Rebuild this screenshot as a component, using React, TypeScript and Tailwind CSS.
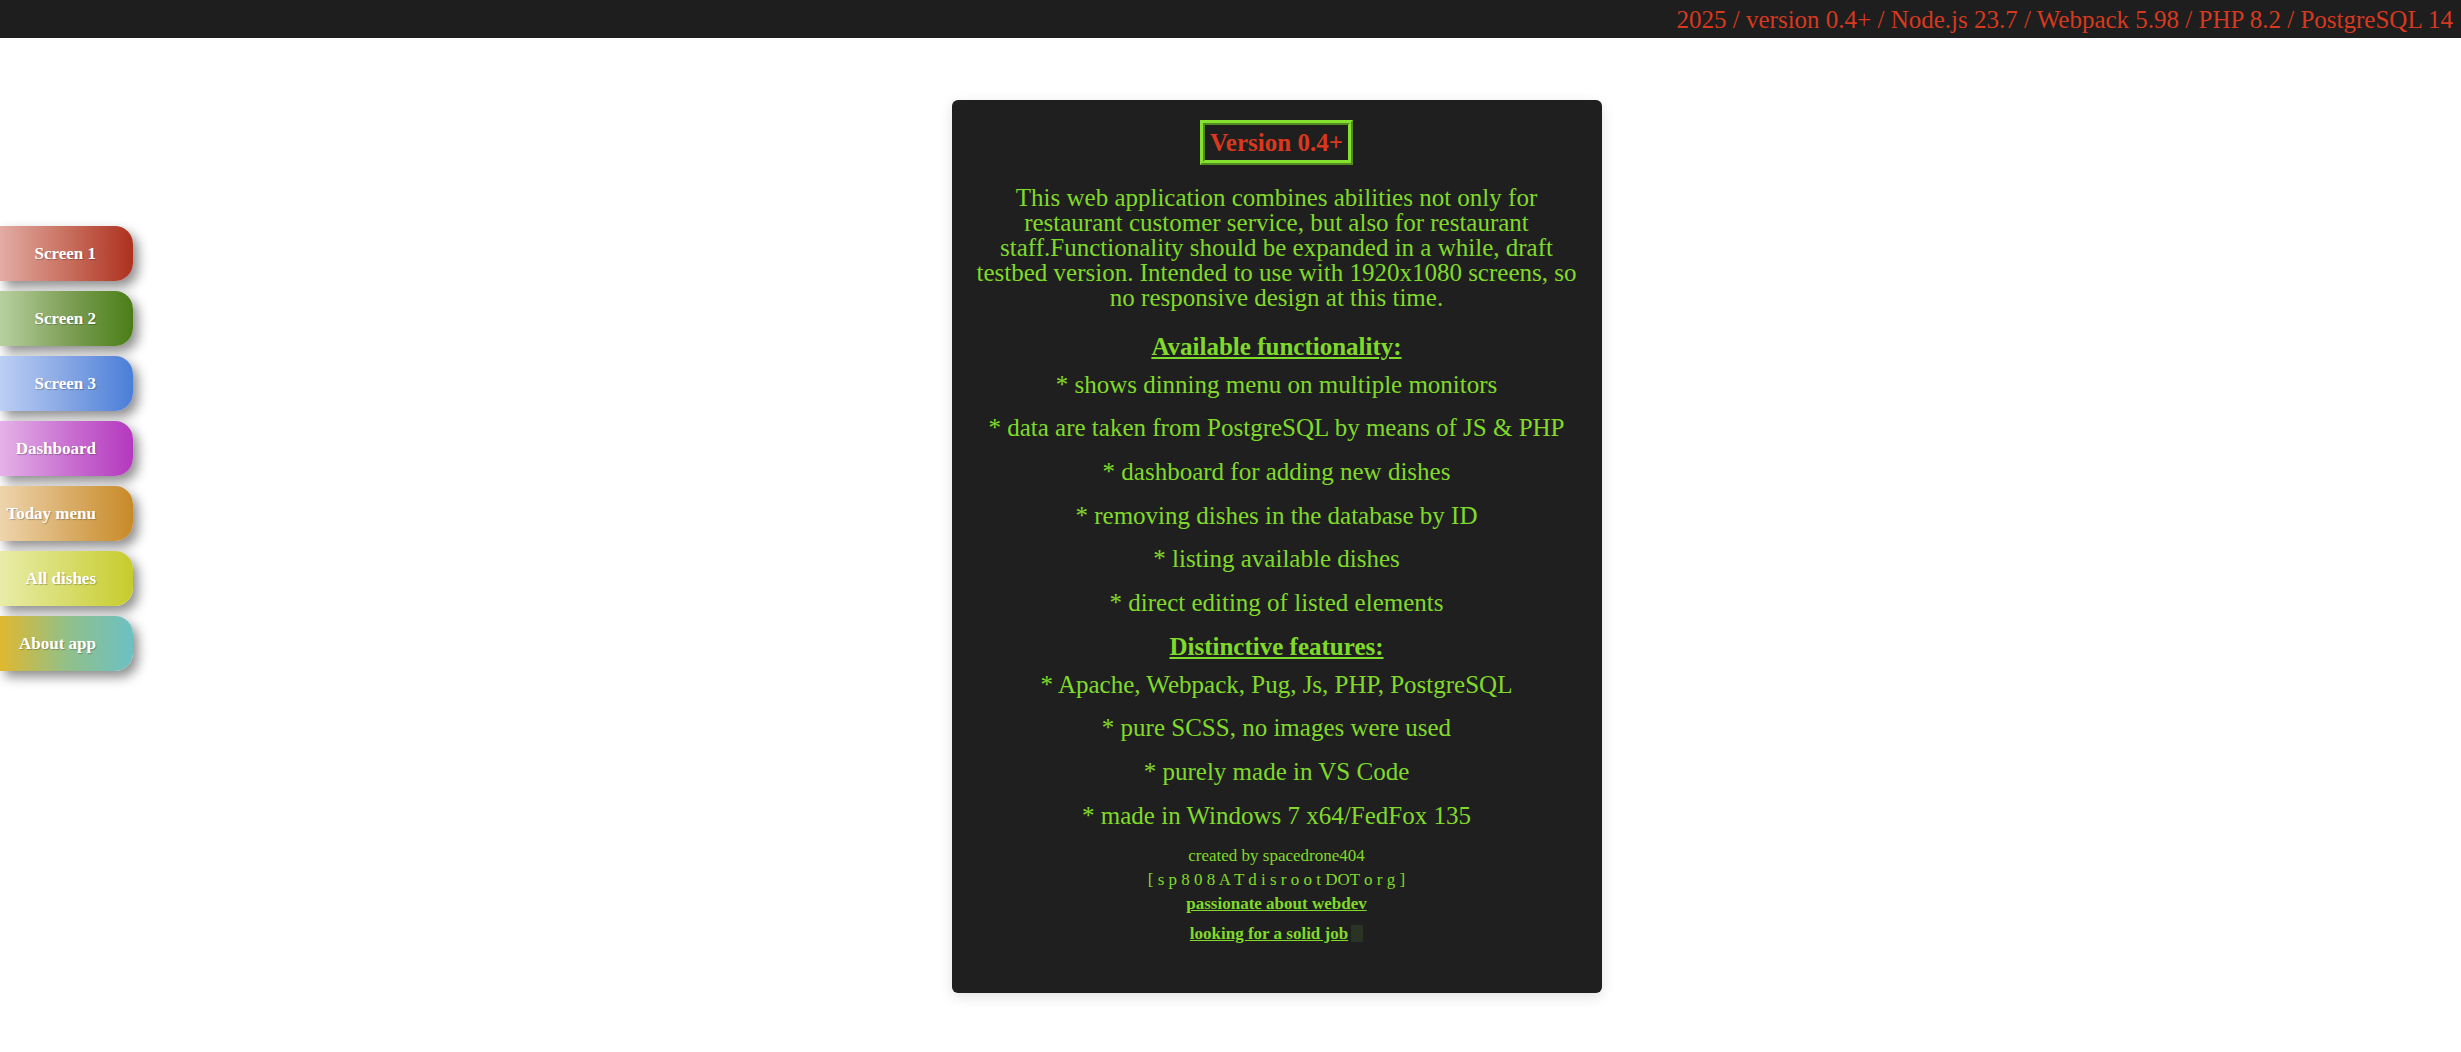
import React from 'react';

const menu = [
  { label: 'Screen 1', bg: 'bg-[linear-gradient(90deg,#e2aca4_0%,#c8705f_50%,#ae301e_100%)]' },
  { label: 'Screen 2', bg: 'bg-[linear-gradient(90deg,#b8d0a0_0%,#7fa058_50%,#4a7e16_100%)]' },
  { label: 'Screen 3', bg: 'bg-[linear-gradient(90deg,#bccff4_0%,#86a6e4_50%,#4a7ed8_100%)]' },
  { label: 'Dashboard', bg: 'bg-[linear-gradient(90deg,#e4b2e8_0%,#ca72d2_50%,#b438be_100%)]' },
  { label: 'Today menu', bg: 'bg-[linear-gradient(90deg,#eed4ac_0%,#daae6a_50%,#c88a28_100%)]' },
  { label: 'All dishes', bg: 'bg-[linear-gradient(90deg,#e8eca8_0%,#d8dc6c_50%,#c6cc2c_100%)]' },
  { label: 'About app', bg: 'bg-[linear-gradient(90deg,#e0b82e_0%,#92c088_50%,#6cc0c4_100%)]' },
];

const available = [
  '* shows dinning menu on multiple monitors',
  '* data are taken from PostgreSQL by means of JS & PHP',
  '* dashboard for adding new dishes',
  '* removing dishes in the database by ID',
  '* listing available dishes',
  '* direct editing of listed elements',
];

const features = [
  '* Apache, Webpack, Pug, Js, PHP, PostgreSQL',
  '* pure SCSS, no images were used',
  '* purely made in VS Code',
  '* made in Windows 7 x64/FedFox 135',
];

const App = () => {
  return (
    <div className="min-h-screen bg-white font-['Liberation_Serif',serif]">
      <header className="h-[38px] bg-[#1e1e1e] flex items-center justify-end pr-[8px] text-[25px] text-[#d6391f] leading-none">
        2025 / version 0.4+ / Node.js 23.7 / Webpack 5.98 / PHP 8.2 / PostgreSQL 14
      </header>

      <div className="flex">
        <nav className="w-[92px] shrink-0 flex flex-col gap-[10px] pt-[188px]">
          {menu.map((m) => (
            <a
              key={m.label}
              href="#"
              className={`w-[133px] h-[55px] shrink-0 flex items-center justify-end pr-[37px] rounded-r-[18px] text-white font-bold text-[17px] whitespace-nowrap shadow-[5px_6px_12px_rgba(0,0,0,0.45)] [text-shadow:1px_1px_1px_rgba(0,0,0,0.25)] ${m.bg}`}
            >
              {m.label}
            </a>
          ))}
        </nav>

        <main className="flex-1 flex justify-center pt-[62px] pb-[58px]">
          <div className="w-[650px] bg-[#1f1f1f] rounded-[6px] shadow-[0_4px_14px_rgba(0,0,0,0.12)] pt-[20px] pb-[47px] px-[20px] flex flex-col items-center text-center text-[#80da2a]">
            <h1 className="border-[5px] [border-style:ridge] border-[#86e030] px-[5px] py-[3px] text-[25px] leading-[29px] font-bold text-[#d8391e]">
              Version 0.4+
            </h1>

            <p className="mt-[20px] text-[25px] leading-[25px]">
              This web application combines abilities not only for restaurant customer service, but also for restaurant
              staff.Functionality should be expanded in a while, draft testbed version. Intended to use with 1920x1080
              screens, so no responsive design at this time.
            </p>

            <h2 className="mt-[24px] text-[25px] leading-[25px] font-bold underline">Available functionality:</h2>
            <div className="mt-[12.5px] flex flex-col gap-[18.7px] text-[25px] leading-[25px]">
              {available.map((t) => (
                <div key={t}>{t}</div>
              ))}
            </div>

            <h2 className="mt-[19px] text-[25px] leading-[25px] font-bold underline">Distinctive features:</h2>
            <div className="mt-[12.7px] flex flex-col gap-[18.7px] text-[25px] leading-[25px]">
              {features.map((t) => (
                <div key={t}>{t}</div>
              ))}
            </div>

            <div className="mt-[16px] text-[17px] leading-[24px]">created by spacedrone404</div>
            <div className="text-[17px] leading-[24px]">[ s p 8 0 8 A T d i s r o o t DOT o r g ]</div>
            <a href="#" className="text-[17px] leading-[24px] font-bold underline">
              passionate about webdev
            </a>
            <div className="mt-[6px] text-[17px] leading-[24px] flex items-center">
              <a href="#" className="font-bold underline">
                looking for a solid job
              </a>
              <span className="ml-[3px] inline-block w-[12px] h-[17px] bg-[#2a3424]" />
            </div>
          </div>
        </main>
      </div>
    </div>
  );
};

export default App;
